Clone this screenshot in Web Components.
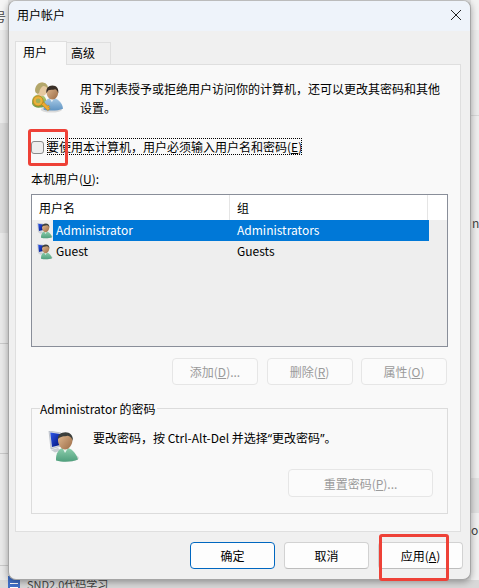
<!DOCTYPE html>
<html lang="zh-CN">
<head>
<meta charset="utf-8">
<title>用户帐户</title>
<style>
  html, body { margin: 0; height: 100%; }
  body {
    width: 479px; height: 588px; overflow: hidden; position: relative;
    background: #e4e4e4;
    font: 12px "Noto Sans CJK SC", "Noto Sans", sans-serif;
    color: #000;
  }
</style>
</head>
<body>

<template id="tpl-dialog">
  <style>
    :host {
      position: absolute; left: 8px; top: 0; width: 463px; height: 580px;
      box-sizing: border-box; display: flex; flex-direction: column;
      background: #f0f0f0; border: 1px solid #a5a5a5; border-top-color: #bbb;
      border-radius: 8px; overflow: hidden;
      box-shadow: 0 2px 7px rgba(0,0,0,.35);
    }
    .title {
      height: 30px; flex: none; background: #eef3fa; box-sizing: border-box;
      display: flex; align-items: center; justify-content: space-between;
      padding: 0 8px 3px; font-size: 12px;
    }
    .body { flex: 1; display: flex; flex-direction: column; padding: 10px 9px 0 6px; }
    .tabs { display: flex; height: 23px; flex: none; align-items: flex-end; }
    .panel {
      height: 468px; flex: none; box-sizing: border-box; background: #f9f9f9;
      border: 1px solid #dfdfdf; padding: 0 15px;
      display: flex; flex-direction: column;
    }
    .foot { display: flex; gap: 9px; justify-content: flex-end; padding: 10px 0 0; margin-right: -2px; }
    svg { display: block; }
  </style>
  <div class="title">
    <span>用户帐户</span>
    <svg width="12" height="12" viewBox="0 0 12 12" fill="none" stroke="#222" stroke-width="1"><path d="M1 1l10 10M11 1L1 11"/></svg>
  </div>
  <div class="body">
    <div class="tabs"><slot name="tabs"></slot></div>
    <div class="panel"><slot></slot></div>
    <div class="foot"><slot name="foot"></slot></div>
  </div>
</template>

<template id="tpl-tab">
  <style>
    :host {
      display: flex; align-items: center; box-sizing: border-box; height: 22px;
      padding: 0 15px 2px 4px; background: #f0f0f0; border: 1px solid #dfdfdf; border-bottom: 0;
      margin-left: -1px;
    }
    :host([active]) {
      height: 24px; margin: 0 0 -1px; padding: 0 19px 5px 7px; background: #f9f9f9; z-index: 1;
    }
  </style>
  <slot></slot>
</template>

<template id="tpl-button">
  <style>
    :host {
      display: flex; align-items: center; justify-content: center; flex: none;
      box-sizing: border-box; width: 85px; height: 27px;
      background: #fdfdfd; border: 1px solid #d2d2d2; border-bottom-color: #bdbdbd;
      border-radius: 4px; color: #000; white-space: nowrap;
    }
    :host([disabled]) { background: #fbfbfb; border-color: #e6e6e6; color: #9a9a9a; }
    :host([primary]) { border: 1px solid #0067c0; }
  </style>
  <slot></slot>
</template>

<template id="tpl-icon">
  <style>
    :host { display: block; flex: none; }
    svg { display: block; width: 100%; height: 100%; }
  </style>
  <svg viewBox="0 0 32 32"></svg>
</template>

<template id="tpl-users-tab">
  <style>
    :host { display: flex; flex-direction: column; }
    .intro { display: flex; height: 64px; padding: 15px 0 0 1px; box-sizing: border-box; gap: 17px; }
    .intro users-icon { width: 31px; height: 32px; margin-top: 2px; }
    .intro p { margin: -1px 0 0; line-height: 19px; width: 364px; }
    .check { display: flex; align-items: flex-start; height: 18px; margin: 9px 0 0; gap: 3px; }
    .box { width: 13px; height: 13px; margin-top: 3px; box-sizing: border-box; background: #eee; border: 1px solid #8a8a8a; border-radius: 3px; }
    .lbl { outline: 1px dotted #000; outline-offset: -1px; line-height: 17px; }
    .cap { margin-top: 14px; height: 24px; line-height: 18px; }
    .list { width: 417px; height: 153px; box-sizing: border-box; border: 1px solid #898e99; background: #eee; }
    .head { display: grid; grid-template-columns: 198px 198px 1fr; height: 25px; background: #fff; }
    .head span { border-right: 1px solid #e5e5e5; padding-left: 7px; line-height: 25px; }
    .row { display: grid; grid-template-columns: 198px 1fr; height: 21px; width: 397px; align-items: center; }
    .row .n { display: flex; align-items: center; height: 21px; padding-left: 5px; }
    .row .n b { font-weight: 400; padding-left: 3px; height: 21px; line-height: 19px; flex: 1; }
    .row .g { padding-left: 7px; height: 21px; line-height: 19px; }
    .row[selected] b, .row[selected] .g { background: #0078d7; color: #fff; }
    .row monitor-icon { width: 16px; height: 16px; }
    .btns { display: flex; justify-content: flex-end; gap: 8.5px; margin-top: 11px; width: 416px; }
    .btns ua-button { width: 86px; }
    .group { margin-top: 23px; width: 417px; height: 106px; box-sizing: border-box; border: 1px solid #dcdcdc; position: relative; display: flex; flex-direction: column; }
    .legend { position: absolute; left: 8px; top: -9px; background: #f9f9f9; padding: 0 1px 0 0; line-height: 17px; }
    .pw { display: flex; padding: 20px 0 0 16px; gap: 13px; height: 60px; box-sizing: border-box; }
    .pw monitor-icon { width: 32px; height: 32px; margin-top: 2px; }
    .pw span { line-height: 17px; }
    .pw i { font: 12px "Noto Sans", sans-serif; }
    .reset { display: flex; justify-content: flex-end; padding-right: 14px; }
    .reset ua-button { width: 145px; height: 28px; }
  </style>
  <div class="intro">
    <users-icon></users-icon>
    <p>用下列表授予或拒绝用户访问你的计算机，还可以更改其密码和其他设置。</p>
  </div>
  <div class="check"><span class="box"></span><span class="lbl">要使用本计算机，用户必须输入用户名和密码(<u>E</u>)</span></div>
  <div class="cap">本机用户(<u>U</u>):</div>
  <div class="list">
    <div class="head"><span>用户名</span><span>组</span><span style="border:0"></span></div>
    <div class="row" selected><div class="n"><monitor-icon></monitor-icon><b>Administrator</b></div><div class="g">Administrators</div></div>
    <div class="row"><div class="n"><monitor-icon></monitor-icon><b>Guest</b></div><div class="g">Guests</div></div>
  </div>
  <div class="btns">
    <ua-button disabled>添加(<u>D</u>)...</ua-button>
    <ua-button disabled>删除(<u>R</u>)</ua-button>
    <ua-button disabled>属性(<u>O</u>)</ua-button>
  </div>
  <div class="group">
    <div class="legend">Administrator 的密码</div>
    <div class="pw"><monitor-icon></monitor-icon><span>要改密码，按 Ctrl-Alt-Del 并选择<i>“</i>更改密码<i>”</i>。</span></div>
    <div class="reset"><ua-button disabled>重置密码(<u>P</u>)...</ua-button></div>
  </div>
</template>

<template id="tpl-note">
  <style>
    :host { position: absolute; box-sizing: border-box; border: 3px solid #ee4137; border-radius: 3px; pointer-events: none; z-index: 5; }
  </style>
</template>

<template id="tpl-backdrop">
  <style>
    :host { position: absolute; inset: 0; display: block; overflow: hidden; color: #444; }
    .l { position: absolute; left: 0; top: 0; width: 8px; height: 100%;
      background: linear-gradient(#f5f5f5 0 30px, #ebebeb 30px 123px, #dcdcdc 123px 233px, #e9e9e9 233px 343px, #c9c9c9 343px 344px, #e9e9e9 344px 453px, #c9c9c9 453px 454px, #e9e9e9 454px 565px, #c9c9c9 565px 566px, #e9e9e9 566px); }
    .r { position: absolute; right: 0; top: 0; width: 8px; height: 100%;
      background: linear-gradient(#f2f2f2 0 30px, #ececec 30px 115px, #d8d8d8 115px 116px, #eeeeee 116px 478px, #e0e0e0 478px 513px, #f0f0f0 513px); }
    .t { position: absolute; white-space: nowrap; line-height: 14px; }
    .doc { position: absolute; left: 8px; top: 576px; width: 12px; height: 14px; background: #3f6fc8; }
    .doc i { display: block; height: 1px; margin: 3px 2px 0; background: #fff; }
    .doc i:first-child { margin-top: 7px; }
    .bar { position: absolute; left: 0; right: 0; bottom: 0; height: 8px; background: #d8d8d8; }
  </style>
  <div class="l"></div><div class="r"></div><div class="bar"></div>
  <span class="t" style="left:-6px;top:10px">号</span>
  <span class="t" style="left:472px;top:216px">nl</span>
  <span class="t" style="left:471px;top:523px">ol</span>
  <div class="doc"><i></i><i></i></div>
  <span class="t" style="left:27px;top:577px;font-size:11px">SND2.0代码学习</span>
</template>

<ua-backdrop></ua-backdrop>
<ua-dialog>
  <ua-tab slot="tabs" active>用户</ua-tab>
  <ua-tab slot="tabs">高级</ua-tab>
  <ua-users-tab></ua-users-tab>
  <ua-button slot="foot" primary>确定</ua-button>
  <ua-button slot="foot">取消</ua-button>
  <ua-button slot="foot">应用(<u>A</u>)</ua-button>
</ua-dialog>
<ua-note style="left:28px;top:129px;width:40px;height:37px"></ua-note>
<ua-note style="left:379px;top:534px;width:70px;height:47px"></ua-note>

<script>
(function() {
  'use strict';

  function fromTemplate(id) {
    return class extends HTMLElement {
      constructor() {
        super();
        this.attachShadow({ mode: 'open' });
        this.shadowRoot.appendChild(document.getElementById(id).content.cloneNode(true));
      }
    };
  }

  const ICON_DEFS = `
    <defs>
      <linearGradient id="skin" x1="0" y1="0" x2="1" y2="1"><stop offset="0" stop-color="#e4bd94"/><stop offset="1" stop-color="#9a6a44"/></linearGradient>
      <linearGradient id="scr" x1="0" y1="0" x2="1" y2="1"><stop offset="0" stop-color="#2f58ea"/><stop offset="1" stop-color="#00127a"/></linearGradient>
      <linearGradient id="teal" x1="0" y1="0" x2="0" y2="1"><stop offset="0" stop-color="#8fcfae"/><stop offset="1" stop-color="#4f9f7c"/></linearGradient>
      <linearGradient id="blue" x1="0" y1="0" x2="0" y2="1"><stop offset="0" stop-color="#a9cbe6"/><stop offset="1" stop-color="#5f93c2"/></linearGradient>
      <linearGradient id="grn" x1="0" y1="0" x2="0" y2="1"><stop offset="0" stop-color="#b7cf7f"/><stop offset="1" stop-color="#6f9a45"/></linearGradient>
    </defs>`;

  // user in front of a monitor
  const MONITOR_ICON = ICON_DEFS + `
    <ellipse cx="20" cy="27" rx="11" ry="3.4" fill="#000" opacity=".14"/>
    <path d="M1 0l12 2v13L3 18z" fill="#d6dbe2" stroke="#a4abb5" stroke-width=".6"/>
    <path d="M2.300 1.500l9.700 1.600V14L4 16z" fill="url(#scr)"/>
    <path d="M3 19l7-2 3 2.500-6 2z" fill="#c9cdd3"/>
    <path d="M8 29.500c-.5-7 3-13 9-13s11 5 13 12c-6 2.500-15 3-22 1z" fill="url(#teal)"/>
    <path d="M14.500 17l2.500 5 3-5z" fill="#e8f4ee"/>
    <path d="M10 9c0-4 3-6.500 7-6.500s7.500 2.500 7.500 6.500c0 4.500-3.500 9.500-7.500 9.500S10 13.500 10 9z" fill="url(#skin)"/>
    <path d="M10 8c-.6-4 3-6.800 7.500-6.800 4.300 0 8 3 7.300 8.800-.6-2.500-2-4.800-5-5.300-3.300.8-7.500.3-9.800 3.300z" fill="#3c3f3c"/>`;

  // two people and a key
  const USERS_ICON = ICON_DEFS + `
    <ellipse cx="20" cy="28" rx="11" ry="3" fill="#000" opacity=".12"/>
    <path d="M0 22c-.6-6 2.500-9.500 7-9.500s8 3 8 8c0 5-4 5.500-8 5.500-3 0-6-1-7-4z" fill="url(#grn)"/>
    <path d="M4 7c0-4 2.500-7 6-7 3.600 0 6 2.500 6 7 0 4-2.500 7-6 7S4 11 4 7z" fill="#e6c9a0"/>
    <path d="M3.500 10C2 5 6 0 10.500 0 14.500 0 17 3 16.500 6.500c-1-2-3-3-5-3-2 1.500-3.500 3-4 6.500-.5 2-2.500 2-4 0z" fill="#b3a76b"/>
    <path d="M12 28c-.8-7 2.500-12 8.500-12S31.500 21 32 27c-5 2.200-14 2.500-20 1z" fill="url(#blue)"/>
    <path d="M18 16l2.500 4.500L23 16z" fill="#e8eef3"/>
    <path d="M15 10c0-4 2.500-6.500 6-6.500S27 6 27 10c0 4-2.500 7.500-6 7.500S15 14 15 10z" fill="url(#skin)"/>
    <path d="M15 11c-1-5 2-8 6-8 4.500 0 7 3.500 6 8-.5-2-1.500-3.500-3-4-3 .8-5 .5-7 1-.8 1-1.500 2-2 3z" fill="#3a3028"/>
    <g transform="translate(-2.700 -1)">
      <circle cx="9" cy="20" r="5.200" fill="#e9b23a" stroke="#b97f17" stroke-width=".8"/>
      <circle cx="9" cy="20" r="2.400" fill="#9fb05a"/>
      <path d="M12.500 23.500l6.500 6.500 2.300-2-1.500-1.500 1-1-1-1-1 .8-4-4z" fill="#eeaa30" stroke="#b97f17" stroke-width=".6"/>
    </g>`;

  function iconClass(markup) {
    return class extends HTMLElement {
      constructor() {
        super();
        this.attachShadow({ mode: 'open' });
        this.shadowRoot.appendChild(document.getElementById('tpl-icon').content.cloneNode(true));
        this.shadowRoot.querySelector('svg').innerHTML = markup;
      }
    };
  }

  customElements.define('ua-backdrop', fromTemplate('tpl-backdrop'));
  customElements.define('ua-dialog', fromTemplate('tpl-dialog'));
  customElements.define('ua-tab', fromTemplate('tpl-tab'));
  customElements.define('ua-button', fromTemplate('tpl-button'));
  customElements.define('ua-note', fromTemplate('tpl-note'));
  customElements.define('ua-users-tab', fromTemplate('tpl-users-tab'));
  customElements.define('users-icon', iconClass(USERS_ICON));
  customElements.define('monitor-icon', iconClass(MONITOR_ICON));
})();
</script>
</body>
</html>
